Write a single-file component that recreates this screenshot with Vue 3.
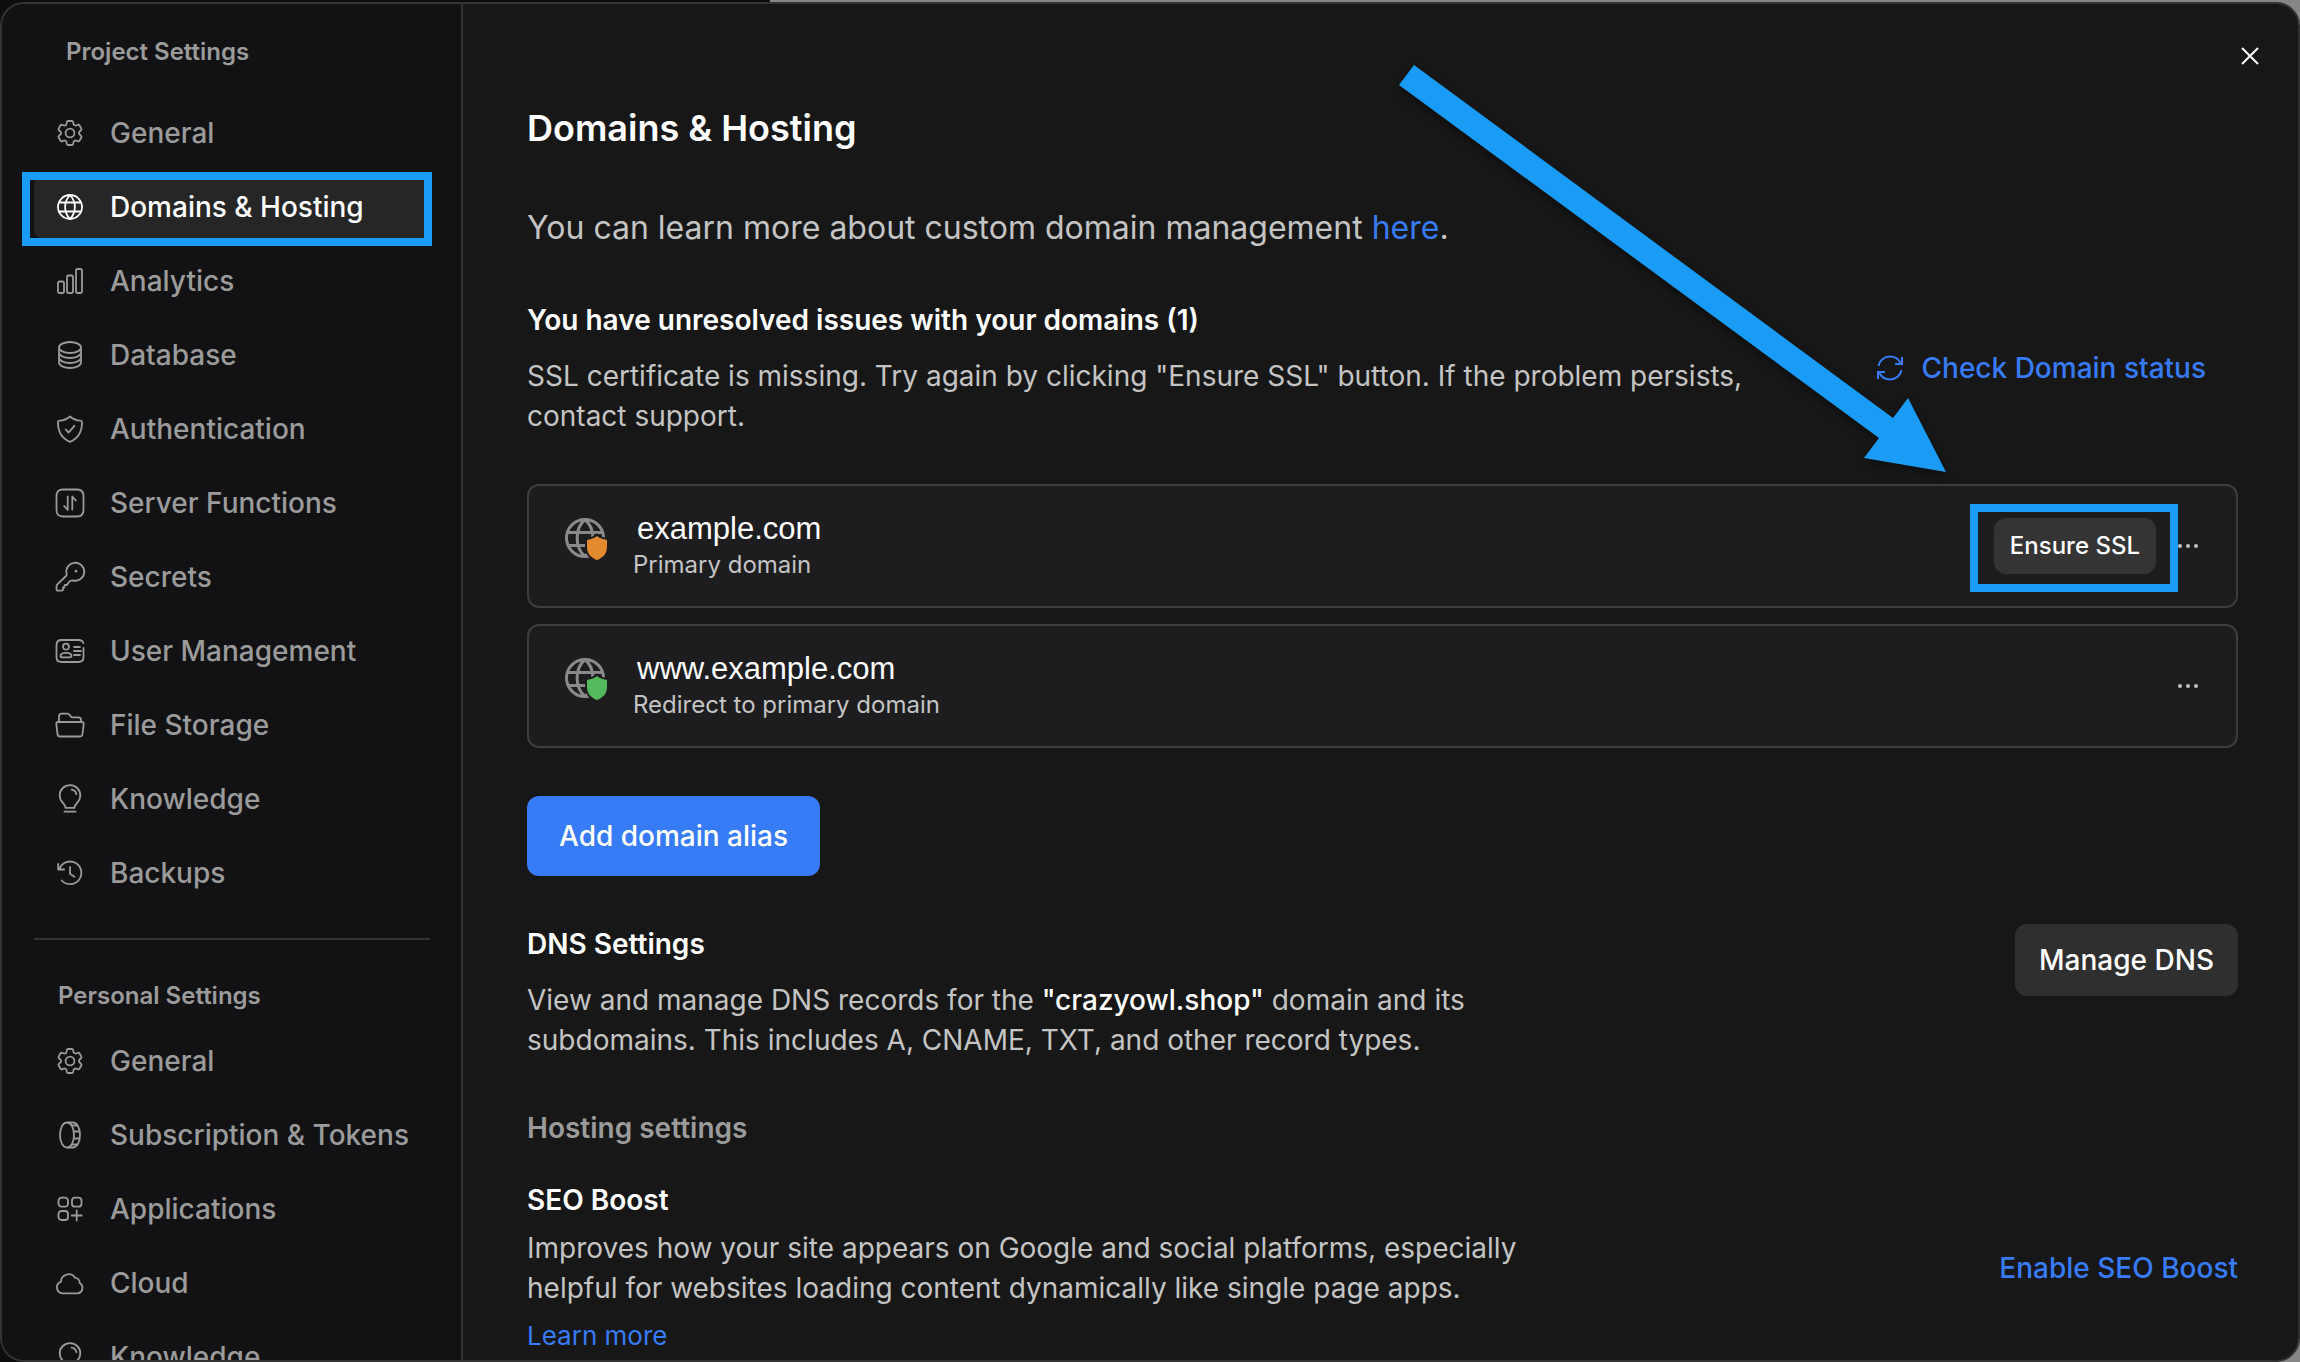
<script setup>
import { ref } from 'vue'

const icons = {
  gear: "M12.8 5.25c.1-.7.7-1.25 1.5-1.25h3.4c.8 0 1.400.5 1.500 1.250l.3 1.700c.1.5.4.9.9 1.200l.3.150c.4.3.9.350 1.400.2l1.600-.6c.7-.3 1.500 0 1.850.65l1.700 3c.4.650.2 1.450-.35 1.900l-1.300 1.100c-.4.350-.6.850-.6 1.350v.3c0 .5.2 1 .6 1.300l1.300 1.100c.6.500.750 1.300.35 1.900l-1.700 3c-.4.650-1.150.950-1.850.650l-1.600-.6c-.5-.2-1-.1-1.400.2l-.3.150c-.5.250-.8.7-.9 1.200l-.3 1.700c-.1.700-.7 1.200-1.500 1.200h-3.400c-.8 0-1.400-.5-1.500-1.200l-.3-1.700c-.1-.5-.4-.95-.9-1.200l-.3-.15c-.4-.3-.9-.4-1.400-.2l-1.600.6c-.7.3-1.500 0-1.850-.65l-1.700-3c-.4-.6-.25-1.400.35-1.900l1.300-1.100c.4-.3.6-.8.6-1.300v-.3c0-.5-.2-1-.6-1.350l-1.300-1.100c-.55-.45-.75-1.250-.35-1.900l1.700-3c.35-.65 1.150-.95 1.850-.65l1.600.6c.5.150 1 .1 1.400-.2l.3-.15c.5-.3.8-.7.9-1.200ZM16 11.600a4.400 4.400 0 1 0 0 8.800a4.400 4.400 0 1 0 0-8.800Z",
  globe: "M16 4a12 12 0 1 0 0 24a12 12 0 1 0 0-24ZM16 4c-6.500 7-6.500 17 0 24M16 4c6.500 7 6.500 17 0 24M5 11.500h22M5 20.500h22",
  bars: "M5.500 16.500h3a1.500 1.500 0 0 1 1.500 1.500v8.500a1.500 1.500 0 0 1-1.500 1.500h-3a1.500 1.500 0 0 1-1.500-1.500V18a1.500 1.500 0 0 1 1.500-1.500ZM14.500 10.500h3a1.500 1.500 0 0 1 1.500 1.500v14.500a1.500 1.500 0 0 1-1.500 1.500h-3a1.500 1.500 0 0 1-1.500-1.500V12a1.500 1.500 0 0 1 1.500-1.500ZM23.500 4h3a1.500 1.500 0 0 1 1.500 1.500v21a1.500 1.500 0 0 1-1.500 1.500h-3a1.500 1.500 0 0 1-1.500-1.500v-21A1.500 1.500 0 0 1 23.500 4Z",
  database: "M27 8.500c0 3-5 5.500-11 5.500S5 11.500 5 8.500 10 3 16 3s11 2.500 11 5.500ZM5 8.500v15C5 26.500 10 29 16 29s11-2.500 11-5.500v-15M5 13.500C5 16.500 10 19 16 19s11-2.500 11-5.500M5 18.500C5 21.500 10 24 16 24s11-2.500 11-5.500",
  shield: "M16 3.500c3 2.600 6.500 4 10.500 4.200.8 0 1.500.7 1.500 1.600 0 9.200-3.500 16.200-12 19.500C7.500 25.500 4 18.500 4 9.300c0-.9.700-1.600 1.500-1.600C9.500 7.500 13 6.100 16 3.500ZM11.700 16.500l2.900 3.100 5.800-6.800",
  functions: "M9 2.500h14c4.500 0 6.500 2 6.500 6.500v14c0 4.500-2 6.500-6.500 6.500H9c-4.500 0-6.500-2-6.500-6.500V9c0-4.500 2-6.500 6.500-6.500ZM13.700 9.500V23l-3.500-4M18.300 22.500V9.500l3.500 4",
  key: "M12.700 13.500A9 9 0 1 1 18.500 19.300L16 20c-1.200.6-2 2.600-3 4h-1.500c-.8 0-1.200.4-1.200 1.200V26.500H9v2c0 .8-.5 1.200-1.200 1.200H4c-.9 0-1.500-.6-1.500-1.500V25c0-.8.3-1.200.8-1.700L12 15c.6-.6.9-1 .7-1.500ZM21.500 10.200a.5.500 0 1 0 1 0a.5.500 0 1 0-1 0",
  user: "M29.500 13v9c0 3.500-1.500 5-5 5h-17c-3.500 0-5-1.500-5-5V10c0-3.500 1.500-5 5-5h17c2.700 0 4.200.9 4.800 3M12 8.700a3 3 0 1 0 0 6a3 3 0 1 0 0-6ZM8.500 22.300c-1.500 0-2-.5-2-1.300 0-2 2-3.200 5.500-3.200s5.500 1.200 5.500 3.200c0 .8-.5 1.300-2 1.300ZM20 12h6M20 16h7M20 20h6",
  folder: "M5 12.800V7.500c0-1.900 1-2.900 2.500-2.900h5.800c1.200 0 1.800.6 2.500 1.500l1.700 2.200h6.800c1.800 0 2.800 1 2.800 2.700v1.800M4 13h24c1.200 0 1.900.8 1.700 2l-1.300 10.500c-.2 1.400-1 2-2.200 2H5.800c-1.200 0-2-.6-2.200-2L2.300 15c-.2-1.200.5-2 1.700-2Z",
  bulb: "M11.500 24.800c0-2-1.200-3.400-3-5.400A10.300 10.300 0 1 1 23.500 19.400c-1.800 2-3 3.400-3 5.400ZM10.500 28.700h11M17.700 6.700c2.500.4 4.200 2 4.700 4.500",
  history: "M5.500 11.800A11.300 11.300 0 1 1 7.700 23.500M4.200 6.800v5.700h5.900M16 10v6.700l4.500 3",
  coin: "M13 3.500c-4 0-7 5.500-7 12.500s3 12.500 7 12.500 7-5.500 7-12.500-3-12.500-7-12.500ZM13 3.500h6c4 0 7 5.500 7 12.500s-3 12.500-7 12.500h-6M17.800 6.500h5.500M19.800 12.500h6M19.800 19.500h6M17.800 25.500h5.500",
  apps: "M7.500 4.700h3.500a3 3 0 0 1 3 3v3a3 3 0 0 1-3 3H7.500a3 3 0 0 1-3-3v-3a3 3 0 0 1 3-3ZM21 4.700h3.500a3 3 0 0 1 3 3v3a3 3 0 0 1-3 3H21a3 3 0 0 1-3-3v-3a3 3 0 0 1 3-3ZM7.500 18h3.500a3 3 0 0 1 3 3v3a3 3 0 0 1-3 3H7.500a3 3 0 0 1-3-3v-3a3 3 0 0 1 3-3ZM22.700 17.500v10M17.700 22.500h10",
  cloud: "M8.500 26.300A5.900 5.900 0 0 1 7 14.800 7.600 7.600 0 0 1 21 10.800 5 5 0 0 1 25.700 16 5.600 5.600 0 0 1 24 26.300Z",
}

const projectItems = [
  { title: "General", icon: "gear" },
  { title: "Domains & Hosting", icon: "globe" },
  { title: "Analytics", icon: "bars" },
  { title: "Database", icon: "database" },
  { title: "Authentication", icon: "shield" },
  { title: "Server Functions", icon: "functions" },
  { title: "Secrets", icon: "key" },
  { title: "User Management", icon: "user" },
  { title: "File Storage", icon: "folder" },
  { title: "Knowledge", icon: "bulb" },
  { title: "Backups", icon: "history" },
]

const personalItems = [
  { title: "General", icon: "gear" },
  { title: "Subscription & Tokens", icon: "coin" },
  { title: "Applications", icon: "apps" },
  { title: "Cloud", icon: "cloud" },
  { title: "Knowledge", icon: "bulb" },
]

const domains = [
  { name: "example.com", note: "Primary domain", status: "warning" },
  { name: "www.example.com", note: "Redirect to primary domain", status: "ok" },
]

const activeItem = ref("Domains & Hosting");
</script>

<template>
  <div id="backdrop">
    <div id="settings-dialog">
      <nav id="sidebar">
        <h2 class="nav-title">Project Settings</h2>
        <ul class="nav-list">
          <li v-for="item in projectItems" :key="item.title">
            <button class="nav-item" :class="{ 'active': item.title == activeItem }" @click="activeItem = item.title">
              <svg class="nav-icon" viewBox="0 0 32 32">
                <path :d="icons[item.icon]" />
              </svg>
              {{ item.title }}
            </button>
          </li>
        </ul>
        <hr class="nav-divider" />
        <h2 class="nav-title personal">Personal Settings</h2>
        <ul class="nav-list">
          <li v-for="item in personalItems" :key="item.title">
            <button class="nav-item">
              <svg class="nav-icon" viewBox="0 0 32 32">
                <path :d="icons[item.icon]" />
              </svg>
              {{ item.title }}
            </button>
          </li>
        </ul>
      </nav>

      <main id="content">
        <button id="close-button" aria-label="Close">
          <svg viewBox="0 0 20 20">
            <path d="M2 2l16 16M18 2L2 18" />
          </svg>
        </button>

        <h1>Domains &amp; Hosting</h1>
        <p id="intro">You can learn more about custom domain management <a href="#">here</a>.</p>

        <section id="issues">
          <div class="section-text">
            <h3>You have unresolved issues with your domains (1)</h3>
            <p>SSL certificate is missing. Try again by clicking "Ensure SSL" button. If the problem persists, contact
              support.</p>
          </div>
          <button id="check-status">
            <svg viewBox="0 0 28 28">
              <path
                d="M2.500 12C3.500 6.500 8 2.500 14 2.500c4.500 0 8.500 2.500 10.500 6.500M26 3v7h-7M25.500 16c-1 5.500-5.500 9.500-11.500 9.500-4.500 0-8.500-2.500-10.500-6.500M2 25v-7h7" />
            </svg>
            Check Domain status
          </button>
        </section>

        <div id="domain-list">
          <div v-for="domain in domains" :key="domain.name" class="domain-card">
            <svg class="domain-icon" :class="domain.status" viewBox="0 0 44 44">
              <path class="domain-globe"
                d="M20 1.500a18.500 18.500 0 1 0 0 37a18.500 18.500 0 1 0 0-37ZM20 1.500c-10.500 9-10.500 28 0 37M20 1.500c10.500 9 10.500 28 0 37M2.500 14.500h35M3 27.500h34" />
              <path class="domain-shield"
                d="M32 18c2.500 2.200 6 3.500 9 3.700.6 0 1 .4 1 1V29c0 7-4.500 11-10 13-5.500-2-10-6-10-13v-6.300c0-.6.4-1 1-1 3-.2 6.500-1.500 9-3.700Z" />
            </svg>
            <div class="domain-text">
              <span class="domain-name">{{ domain.name }}</span>
              <span class="domain-note">{{ domain.note }}</span>
            </div>
            <button v-if="domain.status == 'warning'" class="ensure-button">Ensure SSL</button>
            <button class="more-button" aria-label="More">
              <svg viewBox="0 0 32 32">
                <circle cx="8" cy="16" r="2" />
                <circle cx="16" cy="16" r="2" />
                <circle cx="24" cy="16" r="2" />
              </svg>
            </button>
          </div>

          <!-- Callout arrow pointing at the Ensure SSL button -->
          <svg id="callout-arrow" viewBox="0 0 548 408">
            <polygon points="15,0 494,353 509,333 547,407 465,393 480,373 0,20" />
          </svg>
        </div>

        <button id="add-alias">Add domain alias</button>

        <section id="dns">
          <div class="section-text">
            <h3>DNS Settings</h3>
            <p>View and manage DNS records for the <b>"crazyowl.shop"</b> domain and its subdomains. This includes A,
              CNAME, TXT, and other record types.</p>
          </div>
          <button id="manage-dns">Manage DNS</button>
        </section>

        <h3 id="hosting-title">Hosting settings</h3>

        <section id="seo">
          <div class="section-text">
            <h3>SEO Boost</h3>
            <p>Improves how your site appears on Google and social platforms, especially helpful for websites loading
              content dynamically like single page apps.</p>
            <a id="learn-more" href="#">Learn more</a>
          </div>
          <button id="enable-seo">Enable SEO Boost</button>
        </section>
      </main>
    </div>
  </div>
</template>

<style>
body {
  margin: 0;
  background: #0d0d0d;
}
</style>

<style scoped>
* {
  box-sizing: border-box;
}

#backdrop {
  height: 100vh;
  padding-top: 2px;
  overflow: hidden;
  background: linear-gradient(to right, #0d0d0d 33.5%, #868686 33.5%);
  font-family: Inter, "Liberation Sans", sans-serif;
  font-size: 28px;
  line-height: 40px;
}

#settings-dialog {
  display: flex;
  height: 100%;
  border: 2px solid #333333;
  border-radius: 24px;
  overflow: hidden;
  background: #171717;
}

h1,
h2,
h3,
p,
ul {
  margin: 0;
  padding: 0;
}

h3 {
  font-size: 28px;
  font-weight: 600;
  color: #ffffff;
}

button {
  flex-shrink: 0;
  border: none;
  background: none;
  padding: 0;
  font: inherit;
  font-weight: 500;
  cursor: pointer;
}

a {
  color: #377cf6;
  text-decoration: none;
}

/* Sidebar */
#sidebar {
  flex-shrink: 0;
  width: 461px;
  padding: 32px 31px 0 32px;
  border-right: 2px solid #333333;
  background: #121214;
  overflow: hidden;
}

.nav-title {
  padding-left: 32px;
  margin-bottom: 32px;
  font-size: 24px;
  line-height: 32px;
  font-weight: 600;
  color: #9b9b9b;
}

.nav-title.personal {
  padding-left: 24px;
  margin-bottom: 16px;
}

.nav-list {
  display: flex;
  flex-direction: column;
  gap: 8px;
  list-style: none;
}

.nav-item {
  position: relative;
  display: flex;
  align-items: center;
  gap: 24px;
  width: 100%;
  height: 66px;
  padding-left: 20px;
  border-radius: 12px;
  font-weight: 500;
  white-space: nowrap;
  color: #9b9b9b;
}

.nav-item.active {
  background: #262626;
  color: #ffffff;
}

/* Callout frame round the open page */
.nav-item.active::after {
  content: "";
  position: absolute;
  inset: -2px -2px -6px -12px;
  border: 8px solid #1a9cf6;
}

.nav-icon {
  flex-shrink: 0;
  width: 32px;
  height: 32px;
  fill: none;
  stroke: currentColor;
  stroke-width: 1.8;
  stroke-linecap: round;
  stroke-linejoin: round;
}

.nav-divider {
  height: 2px;
  margin: 32px 0 40px;
  border: none;
  background: #333333;
}

/* Main content */
#content {
  position: relative;
  flex: 1;
  min-width: 0;
  padding: 100px 60px 0 64px;
  color: #c4c4c4;
}

#close-button {
  position: absolute;
  top: 42px;
  right: 38px;
  width: 20px;
  height: 20px;
}

#close-button svg {
  display: block;
  fill: none;
  stroke: #ffffff;
  stroke-width: 2;
}

h1 {
  font-size: 36px;
  line-height: 48px;
  font-weight: 600;
  color: #ffffff;
}

#intro {
  margin: 52px 0 48px;
  font-size: 32px;
  line-height: 48px;
}

section {
  display: flex;
  justify-content: space-between;
  align-items: center;
  gap: 32px;
}

.section-text {
  max-width: 1000px;
}

.section-text p {
  margin-top: 16px;
}

.section-text b {
  font-weight: 500;
  color: #ffffff;
}

#issues .section-text {
  max-width: 1260px;
}

#check-status {
  display: flex;
  align-items: center;
  gap: 18px;
  padding: 0 32px;
  color: #377cf6;
}

#check-status svg {
  width: 28px;
  height: 28px;
  fill: none;
  stroke: currentColor;
  stroke-width: 2;
}

#domain-list {
  position: relative;
  display: flex;
  flex-direction: column;
  gap: 16px;
  margin: 48px 0;
}

.domain-card {
  display: flex;
  align-items: center;
  height: 124px;
  padding: 0 32px 0 36px;
  border: 2px solid #3d3d3f;
  border-radius: 12px;
  background: #1d1d1f;
}

.domain-icon {
  width: 44px;
  height: 44px;
  margin: 0 24px 12px 0;
}

.domain-globe {
  fill: none;
  stroke: #8a8a8a;
  stroke-width: 3;
}

.domain-shield {
  stroke: #1d1d1f;
  stroke-width: 4;
  paint-order: stroke;
}

.domain-icon.warning .domain-shield {
  fill: #e48a2e;
}

.domain-icon.ok .domain-shield {
  fill: #53b95c;
}

.domain-text {
  display: flex;
  flex: 1;
  flex-direction: column;
}

.domain-name {
  padding-left: 4px;
  font-family: "Liberation Sans", Arial, sans-serif;
  font-size: 31px;
  line-height: 38px;
  color: #ffffff;
}

.domain-note {
  font-size: 24px;
  line-height: 34px;
}

.ensure-button {
  position: relative;
  height: 56px;
  margin-right: 16px;
  padding: 0 16px;
  border-radius: 12px;
  background: #343434;
  font-size: 24px;
  color: #ffffff;
}

.ensure-button::after {
  content: "";
  position: absolute;
  inset: -14px -22px -18px -24px;
  border: 8px solid #1a9cf6;
}

.more-button {
  width: 32px;
  height: 32px;
}

.more-button svg {
  display: block;
  fill: #c4c4c4;
}

#callout-arrow {
  position: absolute;
  top: -419px;
  right: 291px;
  width: 548px;
  height: 408px;
  overflow: visible;
  fill: #1a9cf6;
  filter: drop-shadow(0 4px 4px rgba(0, 0, 0, 0.4));
  pointer-events: none;
}

#add-alias {
  height: 80px;
  padding: 0 32px;
  border-radius: 12px;
  background: #377cf6;
  color: #ffffff;
}

#dns {
  align-items: flex-start;
  margin: 48px 0;
}

#manage-dns {
  height: 72px;
  padding: 0 24px;
  border-radius: 12px;
  background: #2f2f2f;
  color: #ffffff;
}

#hosting-title {
  margin-bottom: 32px;
  color: #9b9b9b;
}

#seo .section-text p {
  margin: 8px 0;
}

#learn-more {
  display: block;
  font-size: 26px;
}

#enable-seo {
  color: #377cf6;
}
</style>
